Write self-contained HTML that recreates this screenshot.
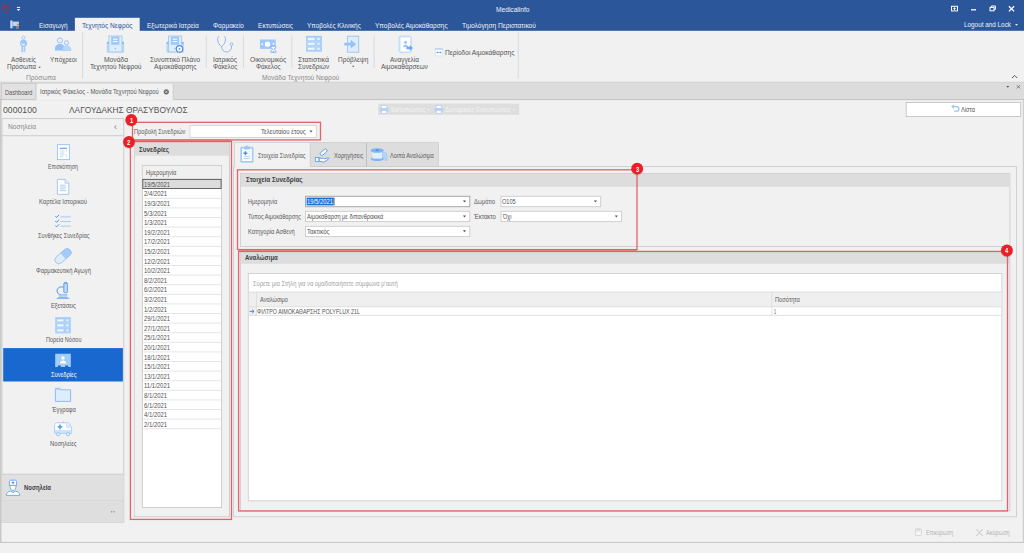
<!DOCTYPE html><html><head><meta charset="utf-8"><title>Medicalinfo</title><style>
html,body{margin:0;padding:0;background:#f1f1f1;}body{width:1024px;height:553px;overflow:hidden;position:relative;font-family:"Liberation Sans",sans-serif;}
#g{position:absolute;left:0;top:0;}
.t{position:absolute;white-space:nowrap;transform-origin:0 50%;height:10px;line-height:10px;}
.b{font-weight:bold;}.n{text-shadow:none;}
</style></head><body>
<svg id="g" width="1024" height="553" viewBox="0 0 1024 553">
<rect x="0.00" y="0.00" width="1024.00" height="30.80" fill="#2b579a" />
<rect x="74.90" y="17.80" width="64.80" height="13.70" fill="#f1f1f1" />
<rect x="0.00" y="82.00" width="1024.00" height="17.60" fill="#dcdcdc" />
<line x1="0.00" y1="82.20" x2="1024.00" y2="82.20" stroke="#d2d2d2" stroke-width="0.8"/>
<line x1="0.00" y1="99.60" x2="1024.00" y2="99.60" stroke="#c2c2c2" stroke-width="1"/>
<rect x="1.60" y="83.60" width="34.40" height="16.00" fill="#e2e2e2" stroke="#c6c6c6" stroke-width="0.8" />
<rect x="36.00" y="83.20" width="137.20" height="17.20" fill="#f1f1f1" />
<line x1="36.00" y1="83.20" x2="36.00" y2="99.60" stroke="#c6c6c6" stroke-width="0.8"/>
<line x1="173.20" y1="83.20" x2="173.20" y2="99.60" stroke="#c6c6c6" stroke-width="0.8"/>
<line x1="36.00" y1="83.20" x2="173.20" y2="83.20" stroke="#d4d4d4" stroke-width="0.8"/>
<rect x="0.00" y="100.00" width="1.50" height="442.50" fill="#c8c8c8" />
<line x1="1023.30" y1="100.00" x2="1023.30" y2="542.50" stroke="#c6c6c6" stroke-width="1"/>
<line x1="0.00" y1="542.40" x2="1024.00" y2="542.40" stroke="#c4c4c4" stroke-width="1"/>
<path d="M1015.00 23.95h3l-1.5 1.7z" fill="#e8eef8"/>
<g stroke="#fff" fill="none" stroke-width="1"><rect x="951.5" y="6.3" width="6" height="4.6"/><path d="M954.5 7.3v2.6M953.2 8.6h2.6" stroke-width="0.9"/><path d="M971 9.8h5" stroke-width="1.3"/><rect x="990" y="7.4" width="4" height="3.4"/><path d="M991.4 7.4v-1.4h4v3.4h-1.4"/><path d="M1008.9 6.2l5.2 5.2M1014.1 6.2l-5.2 5.2" stroke-width="1.3"/></g>
<g fill="none" stroke="#c5242c" stroke-width="0.6"><path d="M5.9 12.4C3.4 11 2 9.2 2.4 7.6M6.4 7.2C7.6 6 9.2 6 9.6 7.4 10 9 8.6 10.8 5.9 12.4"/></g><circle cx="4.5" cy="5.8" r="1.25" fill="#c5242c"/><path d="M2.3 8.6l2.4-.8 1.6.2 1.6-1.4" stroke="#c5242c" fill="none" stroke-width="1"/><circle cx="6.7" cy="11.5" r="0.6" fill="#c5242c"/>
<path d="M16.9 7.4h3.2" stroke="#fff" stroke-width="1"/><path d="M16.8 9h3.4l-1.7 2z" fill="#fff"/>
<g><rect x="10.3" y="20.5" width="2.2" height="7.8" fill="#d3def1"/><rect x="12.5" y="21.6" width="6.4" height="4.6" fill="#c4d3ec"/><rect x="13" y="26.1" width="2.6" height="2.6" fill="#1b6fd8"/><rect x="16" y="26.1" width="2.9" height="2.8" fill="#8d8579"/><rect x="17.2" y="23.8" width="1.7" height="1.3" fill="#d85a5a"/></g>
<line x1="82.60" y1="32.50" x2="82.60" y2="78.40" stroke="#d6d6d6" stroke-width="0.9"/>
<line x1="518.20" y1="32.50" x2="518.20" y2="78.40" stroke="#d6d6d6" stroke-width="0.9"/>
<line x1="206.20" y1="35.50" x2="206.20" y2="67.80" stroke="#d6d6d6" stroke-width="0.9"/>
<line x1="243.40" y1="35.50" x2="243.40" y2="67.80" stroke="#d6d6d6" stroke-width="0.9"/>
<line x1="291.80" y1="35.50" x2="291.80" y2="67.80" stroke="#d6d6d6" stroke-width="0.9"/>
<line x1="374.10" y1="35.50" x2="374.10" y2="67.80" stroke="#d6d6d6" stroke-width="0.9"/>
<path d="M38.30 66.65h2.6l-1.3 1.5z" fill="#666"/>
<path d="M351.90 65.85h2.6l-1.3 1.5z" fill="#666"/>
<path d="M1012 78l2.6-2.6 2.6 2.6" fill="none" stroke="#555" stroke-width="1"/>
<path d="M1006.30 86.00h3l-1.5 1.8z" fill="#555"/>
<path d="M1016.8 85.2l3.2 3.2M1020 85.2l-3.2 3.2" stroke="#666" stroke-width="0.8"/>
<circle cx="166.3" cy="91.8" r="2.6" fill="#6a6a6a"/><path d="M165.2 90.7l2.2 2.2M167.4 90.7l-2.2 2.2" stroke="#f1f1f1" stroke-width="0.7"/>
<rect x="378.10" y="103.60" width="141.10" height="11.20" fill="#dedede" />
<path d="M427.00 108.90h2.4l-1.2 1.4z" fill="#f4f4f4"/>
<path d="M512.40 108.90h2.4l-1.2 1.4z" fill="#f4f4f4"/>
<g transform="translate(379.8,105.7)"><rect x="1.8" y="0" width="5" height="3" fill="#fff" stroke="#a9c9ee" stroke-width="0.6"/><rect x="0" y="2.4" width="8.6" height="3.6" rx="0.8" fill="#b4d2f2"/><rect x="1.8" y="4.6" width="5" height="3" fill="#fff" stroke="#a9c9ee" stroke-width="0.6"/></g>
<g transform="translate(434.4,105.7)"><rect x="1.8" y="0" width="5" height="3" fill="#fff" stroke="#a9c9ee" stroke-width="0.6"/><rect x="0" y="2.4" width="8.6" height="3.6" rx="0.8" fill="#b4d2f2"/><rect x="1.8" y="4.6" width="5" height="3" fill="#fff" stroke="#a9c9ee" stroke-width="0.6"/></g>
<rect x="906.20" y="102.50" width="114.40" height="14.00" fill="#fff" stroke="#c4c4c4" stroke-width="0.9" />
<path d="M952.2 106.6h4.4a2.2 2.2 0 0 1 0 4.6h-2.4" fill="none" stroke="#9cc4ee" stroke-width="1.3"/><path d="M953.8 104.4l-2.6 2.2 2.6 2.2z" fill="#9cc4ee"/>
<rect x="2.00" y="118.60" width="121.80" height="403.60" fill="none" stroke="#cacaca" stroke-width="0.9" />
<line x1="2.00" y1="135.70" x2="123.80" y2="135.70" stroke="#cacaca" stroke-width="0.9"/>
<path d="M116.3 125.4l-1.6 1.7 1.6 1.7" fill="none" stroke="#666" stroke-width="0.8"/>
<rect x="3.20" y="348.10" width="119.70" height="33.40" fill="#1968d0" />
<rect x="2.40" y="474.20" width="121.00" height="26.40" fill="#e0e0e0" />
<line x1="2.00" y1="474.20" x2="123.80" y2="474.20" stroke="#c8c8c8" stroke-width="0.9"/>
<rect x="2.40" y="500.40" width="121.00" height="1.20" fill="#cdcdcd" />
<rect x="2.40" y="501.60" width="121.00" height="20.20" fill="#dedede" />
<rect x="111" y="511.2" width="1.2" height="1.2" fill="#888"/><rect x="113.4" y="511.2" width="1.2" height="1.2" fill="#888"/>
<rect x="190.00" y="125.60" width="126.30" height="11.90" fill="#fff" stroke="#cfcfcf" stroke-width="0.8" />
<path d="M309.45 130.60h3.1l-1.55 2.0z" fill="#555"/>
<rect x="134.30" y="142.80" width="95.20" height="373.90" fill="none" stroke="#cdcdcd" stroke-width="0.9" />
<rect x="134.60" y="143.00" width="94.60" height="12.70" fill="#dddddd" />
<rect x="142.30" y="165.50" width="79.30" height="342.00" fill="#fff" stroke="#c9c9c9" stroke-width="0.9" />
<rect x="142.80" y="166.00" width="78.30" height="13.10" fill="#f0f0f0" />
<line x1="142.30" y1="179.10" x2="221.60" y2="179.10" stroke="#cfcfcf" stroke-width="0.8"/>
<rect x="142.80" y="179.40" width="78.30" height="9.10" fill="#dcdcdc" stroke="#555" stroke-width="0.9" />
<line x1="142.80" y1="198.30" x2="221.10" y2="198.30" stroke="#dedede" stroke-width="0.8"/>
<line x1="142.80" y1="207.90" x2="221.10" y2="207.90" stroke="#dedede" stroke-width="0.8"/>
<line x1="142.80" y1="217.50" x2="221.10" y2="217.50" stroke="#dedede" stroke-width="0.8"/>
<line x1="142.80" y1="227.10" x2="221.10" y2="227.10" stroke="#dedede" stroke-width="0.8"/>
<line x1="142.80" y1="236.70" x2="221.10" y2="236.70" stroke="#dedede" stroke-width="0.8"/>
<line x1="142.80" y1="246.30" x2="221.10" y2="246.30" stroke="#dedede" stroke-width="0.8"/>
<line x1="142.80" y1="255.90" x2="221.10" y2="255.90" stroke="#dedede" stroke-width="0.8"/>
<line x1="142.80" y1="265.50" x2="221.10" y2="265.50" stroke="#dedede" stroke-width="0.8"/>
<line x1="142.80" y1="275.10" x2="221.10" y2="275.10" stroke="#dedede" stroke-width="0.8"/>
<line x1="142.80" y1="284.70" x2="221.10" y2="284.70" stroke="#dedede" stroke-width="0.8"/>
<line x1="142.80" y1="294.30" x2="221.10" y2="294.30" stroke="#dedede" stroke-width="0.8"/>
<line x1="142.80" y1="303.90" x2="221.10" y2="303.90" stroke="#dedede" stroke-width="0.8"/>
<line x1="142.80" y1="313.50" x2="221.10" y2="313.50" stroke="#dedede" stroke-width="0.8"/>
<line x1="142.80" y1="323.10" x2="221.10" y2="323.10" stroke="#dedede" stroke-width="0.8"/>
<line x1="142.80" y1="332.70" x2="221.10" y2="332.70" stroke="#dedede" stroke-width="0.8"/>
<line x1="142.80" y1="342.30" x2="221.10" y2="342.30" stroke="#dedede" stroke-width="0.8"/>
<line x1="142.80" y1="351.90" x2="221.10" y2="351.90" stroke="#dedede" stroke-width="0.8"/>
<line x1="142.80" y1="361.50" x2="221.10" y2="361.50" stroke="#dedede" stroke-width="0.8"/>
<line x1="142.80" y1="371.10" x2="221.10" y2="371.10" stroke="#dedede" stroke-width="0.8"/>
<line x1="142.80" y1="380.70" x2="221.10" y2="380.70" stroke="#dedede" stroke-width="0.8"/>
<line x1="142.80" y1="390.30" x2="221.10" y2="390.30" stroke="#dedede" stroke-width="0.8"/>
<line x1="142.80" y1="399.90" x2="221.10" y2="399.90" stroke="#dedede" stroke-width="0.8"/>
<line x1="142.80" y1="409.50" x2="221.10" y2="409.50" stroke="#dedede" stroke-width="0.8"/>
<line x1="142.80" y1="419.10" x2="221.10" y2="419.10" stroke="#dedede" stroke-width="0.8"/>
<line x1="142.80" y1="428.70" x2="221.10" y2="428.70" stroke="#dedede" stroke-width="0.8"/>
<rect x="233.60" y="166.60" width="782.90" height="350.20" fill="none" stroke="#cdcdcd" stroke-width="0.9" />
<rect x="310.30" y="142.60" width="128.20" height="24.00" fill="#dddddd" stroke="#cdcdcd" stroke-width="0.8" />
<line x1="366.50" y1="143.00" x2="366.50" y2="166.40" stroke="#b8b8b8" stroke-width="0.8"/>
<rect x="234.40" y="142.40" width="75.90" height="25.00" fill="#f1f1f1" />
<path d="M234.4 167V142.4H310.3V166.6" fill="none" stroke="#cdcdcd" stroke-width="0.9"/>
<rect x="240.40" y="173.50" width="769.50" height="73.00" fill="none" stroke="#cdcdcd" stroke-width="0.9" />
<rect x="240.80" y="173.80" width="768.70" height="13.00" fill="#dddddd" />
<rect x="305.50" y="196.30" width="164.30" height="10.40" fill="#fff" stroke="#a8a8a8" stroke-width="1" />
<rect x="305.50" y="211.30" width="164.30" height="10.30" fill="#fff" stroke="#cbcbcb" stroke-width="0.9" />
<rect x="305.50" y="226.30" width="164.30" height="10.30" fill="#fff" stroke="#cbcbcb" stroke-width="0.9" />
<path d="M462.95 200.40h3.1l-1.55 2.0z" fill="#555"/>
<path d="M462.95 215.40h3.1l-1.55 2.0z" fill="#555"/>
<path d="M462.95 230.30h3.1l-1.55 2.0z" fill="#555"/>
<rect x="306.60" y="197.60" width="26.80" height="7.80" fill="#1a6fd8" />
<line x1="334.00" y1="197.60" x2="334.00" y2="205.40" stroke="#333" stroke-width="0.8"/>
<rect x="501.00" y="196.30" width="99.70" height="10.40" fill="#fff" stroke="#cbcbcb" stroke-width="0.9" />
<rect x="501.00" y="211.30" width="120.60" height="10.30" fill="#fff" stroke="#cbcbcb" stroke-width="0.9" />
<path d="M593.85 200.40h3.1l-1.55 2.0z" fill="#555"/>
<path d="M614.75 215.40h3.1l-1.55 2.0z" fill="#555"/>
<rect x="240.40" y="252.30" width="769.50" height="258.30" fill="none" stroke="#cdcdcd" stroke-width="0.9" />
<rect x="240.80" y="252.60" width="768.70" height="11.20" fill="#dddddd" />
<rect x="248.30" y="273.50" width="753.60" height="227.30" fill="#fff" stroke="#cfcfcf" stroke-width="0.9" />
<rect x="248.80" y="292.00" width="752.60" height="14.80" fill="#efefef" />
<rect x="248.80" y="306.80" width="7.60" height="8.60" fill="#efefef" />
<line x1="248.30" y1="292.10" x2="1001.90" y2="292.10" stroke="#d9d9d9" stroke-width="0.8"/>
<line x1="248.30" y1="306.80" x2="1001.90" y2="306.80" stroke="#d9d9d9" stroke-width="0.8"/>
<line x1="256.50" y1="292.00" x2="256.50" y2="315.40" stroke="#d9d9d9" stroke-width="0.8"/>
<line x1="771.90" y1="292.00" x2="771.90" y2="315.40" stroke="#d9d9d9" stroke-width="0.8"/>
<line x1="248.30" y1="315.40" x2="1001.90" y2="315.40" stroke="#d9d9d9" stroke-width="0.8"/>
<path d="M249.6 311.4h4.2M252.2 309.8l1.8 1.6-1.8 1.6" fill="none" stroke="#2a6fd6" stroke-width="0.8"/>
<rect x="915.6" y="529" width="5.8" height="6.6" rx="0.6" fill="#f6f6f6" stroke="#cfcfcf" stroke-width="0.8"/><rect x="916.8" y="529" width="3" height="2" fill="none" stroke="#cfcfcf" stroke-width="0.6"/>
<path d="M976.4 529.2l6.2 6.6M982.6 529.2l-6.2 6.6" stroke="#d0d0d0" stroke-width="1.2"/>
<rect x="132.50" y="139.60" width="99.00" height="2.30" fill="#ea9096" />
<rect x="238.60" y="249.30" width="398.40" height="2.50" fill="#ea9096" />
<rect x="132.50" y="122.30" width="188.00" height="17.60" fill="none" stroke="#e5626a" stroke-width="1.3" />
<rect x="130.40" y="141.50" width="101.10" height="377.90" fill="none" stroke="#e5626a" stroke-width="1.3" />
<rect x="237.50" y="169.80" width="399.50" height="79.80" fill="none" stroke="#e5626a" stroke-width="1.3" />
<rect x="238.60" y="251.40" width="768.90" height="259.60" fill="none" stroke="#e5626a" stroke-width="1.3" />
<circle cx="131.3" cy="120.5" r="6.3" fill="rgba(0,0,0,0.12)"/><circle cx="131.3" cy="120" r="5.9" fill="#ec1e28"/>
<circle cx="129" cy="142.5" r="6.3" fill="rgba(0,0,0,0.12)"/><circle cx="129" cy="142" r="5.9" fill="#ec1e28"/>
<circle cx="637.2" cy="169.2" r="6.3" fill="rgba(0,0,0,0.12)"/><circle cx="637.2" cy="168.7" r="5.9" fill="#ec1e28"/>
<circle cx="1006.9" cy="251.0" r="6.3" fill="rgba(0,0,0,0.12)"/><circle cx="1006.9" cy="250.5" r="5.9" fill="#ec1e28"/>
<g><rect x="57.4" y="144.6" width="12" height="15" fill="#fdfeff" stroke="#9cc2ee" stroke-width="0.9"/><path d="M59.8 148.3h7.2" stroke="#4f92dc" stroke-width="1"/><path d="M59.8 151h4.6M59.8 153h4.6M59.8 154.8h4.6M59.8 156.6h3.4M65.6 151h1.4M65.6 154.8h1.4M65.6 156.6h1.4" stroke="#b9d4f2" stroke-width="0.8"/></g>
<g><path d="M57.4 179.4h7.6l3.8 3.8v11.2h-11.4z" fill="#fdfeff" stroke="#9cc2ee" stroke-width="0.9"/><path d="M65 179.4v3.8h3.8" fill="#e6f0fc" stroke="#9cc2ee" stroke-width="0.7"/><path d="M59.8 185.2h5.6M59.8 187h6.6M59.8 188.8h5.6M59.8 190.6h6.6" stroke="#a9c9ef" stroke-width="0.9"/></g>
<g fill="none"><path d="M55.4 216.2l1.2 1.3 2.4-2.6M55.4 221l1.2 1.3 2.4-2.6M55.4 225.6l1.2 1.3 2.4-2.6" stroke="#4f92dc" stroke-width="1"/><path d="M60.4 216.8h10.4" stroke="#c4daf4" stroke-width="1.8"/><path d="M60.4 221.5h10.4M60.4 226.1h10.4" stroke="#a4c6ee" stroke-width="0.9"/></g>
<g transform="rotate(-41 63 256.2)"><rect x="53.6" y="252.3" width="18.8" height="7.8" rx="3.9" fill="#deedfd" stroke="#9cc2ee" stroke-width="0.9"/><path d="M63.6 252.3h4.9a3.9 3.9 0 0 1 0 7.8h-4.9z" fill="#a3ccf8" stroke="#9cc2ee" stroke-width="0.9"/></g>
<g><rect x="63.8" y="283" width="3.6" height="9.6" rx="0.6" fill="#bcdafb" stroke="#4f92dc" stroke-width="0.8"/><rect x="64.4" y="282.2" width="2.4" height="1.2" fill="#4f92dc"/><path d="M63.4 287.2c-4.2-1.4-7 1.6-6.2 4.6.4 1.6 1.8 2.6 3.4 2.8" fill="none" stroke="#4f92dc" stroke-width="1"/><rect x="58.8" y="294.2" width="8.6" height="1.4" fill="#8bbaf0"/><path d="M57.4 298.4l1.6-2h8l1.6 2z" fill="#8bbaf0"/><rect x="56.6" y="297.8" width="12.8" height="1" fill="#7db1ee"/></g>
<g><rect x="55.2" y="317.2" width="15.6" height="16.2" fill="#a3ccf8"/><rect x="57" y="319.2" width="6.6" height="2.2" fill="#f2f8ff" stroke="#c2dcf8" stroke-width="0.4"/><rect x="65.6" y="319.2" width="3.4" height="2.2" fill="#d9eafc"/><path d="M55.2 322.9h15.6" stroke="#d4e6fb" stroke-width="0.5"/><rect x="57" y="324.2" width="6.6" height="2.2" fill="#f2f8ff" stroke="#c2dcf8" stroke-width="0.4"/><rect x="65.6" y="324.2" width="3.4" height="2.2" fill="#d9eafc"/><path d="M55.2 327.9h15.6" stroke="#d4e6fb" stroke-width="0.5"/><rect x="57" y="329.2" width="6.6" height="2.2" fill="#f2f8ff" stroke="#c2dcf8" stroke-width="0.4"/><rect x="65.6" y="329.2" width="3.4" height="2.2" fill="#d9eafc"/><path d="M55.2 332.9h15.6" stroke="#d4e6fb" stroke-width="0.5"/></g>
<g><path d="M55.2 353.7h15.6v13.3h-2.6v-1.4h-3v1.4h-4.4v-1.4h-3v1.4h-2.6z" fill="#a2cdfb"/><circle cx="63" cy="358" r="1.7" fill="#fff"/><path d="M59.9 363.4c0-2 1.4-3 3.1-3s3.1 1 3.1 3z" fill="#fff"/></g>
<g><path d="M55.4 388.4h4.6l.8 1.4h9.8v11.6h-15.2z" fill="#deedfd" stroke="#86b6ec" stroke-width="0.9"/><path d="M55.4 388.4h4.6l.8 1.4h-5.4z" fill="#a9cff8"/></g>
<g><path d="M54.6 433.4v-8c0-1.6 1-2.6 2.6-2.6h10.2c1.4 0 2.2.6 2.8 1.8l1.4 3.2v5.6z" fill="#fff" stroke="#a6cbf6" stroke-width="0.9"/><path d="M66 423.4h1.6c1 0 1.6.4 2 1.4l1.4 3.4h-5z" fill="#d5e8fd"/><rect x="55" y="430" width="16.2" height="3" fill="#cfe4fc"/><path d="M60 424.6v4.6M57.7 426.9h4.6" stroke="#5da2f2" stroke-width="1.7"/><path d="M62.4 422.6l1-1.4 1 1.4z" fill="#8bbaf0"/><circle cx="58.2" cy="434.2" r="1.7" fill="#e8f2fe" stroke="#8bbaf0" stroke-width="0.8"/><circle cx="68" cy="434.2" r="1.7" fill="#e8f2fe" stroke="#8bbaf0" stroke-width="0.8"/></g>
<g><circle cx="23.4" cy="37.6" r="1.5" fill="#f4f9ff" stroke="#8bbaf0" stroke-width="0.8"/><path d="M20 43.2c0-2.2 1.4-3.6 3.5-3.6s3.6 1.4 3.6 3.6c0 1.6-.8 2.8-1.8 3.4h-3.6c-1-.6-1.7-1.8-1.7-3.4z" fill="#9dc8f7"/><rect x="21.3" y="46" width="1.7" height="6.2" fill="#a6cdf8"/><rect x="23.6" y="46" width="1.7" height="6.2" fill="#a6cdf8"/><path d="M21.2 43.6l1.2 1h2.4" stroke="#fff" stroke-width="1" fill="none"/></g>
<g><path d="M55 50.6v-2.2c0-2.8 2-4.5 4.9-4.5s4.9 1.7 4.9 4.5v2.2z" fill="#93c2f6"/><circle cx="59.9" cy="40.5" r="2.6" fill="#e4f0fe" stroke="#8bbaf0" stroke-width="0.8"/><path d="M62.4 50.6v-1.4c0-2.2 1.6-3.4 4.2-3.4s4.3 1.2 4.3 3.4v1.4z" fill="#b8d8fa" stroke="#9cc6f5" stroke-width="0.5"/><circle cx="66.5" cy="42.8" r="2.1" fill="#e4f0fe" stroke="#8bbaf0" stroke-width="0.8"/></g>
<g transform="translate(107,0)"><path d="M0.2 42h16.4v10h-16.4z" fill="#c6dffb" stroke="#9cc2ee" stroke-width="0.6"/><rect x="1.9" y="36" width="13.1" height="16" fill="#deedfd" stroke="#9cc2ee" stroke-width="0.8"/><rect x="4.2" y="36.6" width="8.2" height="8.2" fill="#9dc8f7"/><path d="M6 39.2h4.6M6 41.6h4.6" stroke="#fff" stroke-width="1"/><rect x="0.2" y="42" width="1.8" height="2" fill="#8bbaf0"/><rect x="15" y="42" width="1.8" height="2" fill="#8bbaf0"/><path d="M8.3 47.4l.8 1.4a.9.9 0 0 1-1.6 0z" fill="#7fb2ee"/></g>
<g transform="translate(166.7,0)"><path d="M0.2 42h16.4v10h-16.4z" fill="#c6dffb" stroke="#9cc2ee" stroke-width="0.6"/><rect x="1.9" y="36" width="13.1" height="16" fill="#deedfd" stroke="#9cc2ee" stroke-width="0.8"/><rect x="4.2" y="36.6" width="8.2" height="8.2" fill="#9dc8f7"/><path d="M6 39.2h4.6M6 41.6h4.6" stroke="#fff" stroke-width="1"/><rect x="0.2" y="42" width="1.8" height="2" fill="#8bbaf0"/><rect x="15" y="42" width="1.8" height="2" fill="#8bbaf0"/><path d="M8.3 47.4l.8 1.4a.9.9 0 0 1-1.6 0z" fill="#7fb2ee"/></g>
<circle cx="179.5" cy="48.9" r="3.2" fill="#fff" stroke="#4f8fdc" stroke-width="1.2"/><circle cx="179.5" cy="48.9" r="0.9" fill="#4f8fdc"/>
<g fill="none" stroke="#86b2e6" stroke-width="0.9"><path d="M219.2 36.8c-1 0-1.6.4-1.6 1.6 0 3.6 1.4 6.6 4 8.2 2.6-1.6 4-4.6 4-8.2 0-1.2-.6-1.6-1.6-1.6"/><path d="M221.6 46.6c0 3.2 2 5.4 4.9 5.4s5-2.2 5-5v-1.4"/><circle cx="231.6" cy="44.2" r="1.3" fill="#f4f9ff"/></g>
<g><rect x="260" y="39.5" width="15.7" height="9.4" fill="#9dc8f7"/><circle cx="267.5" cy="44.2" r="2.6" fill="#fff"/><circle cx="262.2" cy="44.2" r="0.9" fill="#fff"/><circle cx="273.4" cy="43.8" r="0.9" fill="#fff"/><path d="M270.9 46.2h5v1l-1.8 2 1.8 2v1.2h-5v-1.2l1.8-2-1.8-2z" fill="#fff" stroke="#6ea8ec" stroke-width="0.8"/><path d="M271.8 51.8l1.6-1.4 1.6 1.4z" fill="#8bbaf0"/></g>
<g><rect x="306.1" y="35.9" width="15.9" height="16" fill="#a3ccf8"/><rect x="307.8" y="37.8" width="7" height="2.4" fill="#eef6ff" stroke="#c2dcf8" stroke-width="0.4"/><rect x="317" y="37.8" width="3.2" height="2.4" fill="#d9eafc"/><path d="M306.1 41.699999999999996h15.9M316 36.8v5" stroke="#cfe3fb" stroke-width="0.5"/><rect x="307.8" y="42.7" width="7" height="2.4" fill="#eef6ff" stroke="#c2dcf8" stroke-width="0.4"/><rect x="317" y="42.7" width="3.2" height="2.4" fill="#d9eafc"/><path d="M306.1 46.6h15.9M316 41.7v5" stroke="#cfe3fb" stroke-width="0.5"/><rect x="307.8" y="47.6" width="7" height="2.4" fill="#eef6ff" stroke="#c2dcf8" stroke-width="0.4"/><rect x="317" y="47.6" width="3.2" height="2.4" fill="#d9eafc"/><path d="M306.1 51.5h15.9M316 46.6v5" stroke="#cfe3fb" stroke-width="0.5"/></g>
<g><rect x="347.4" y="36.2" width="11.3" height="16" fill="#deedfd" stroke="#9cc2ee" stroke-width="0.9"/><path d="M344.3 42.8h6.4v-3l5.4 4.4-5.4 4.4v-3h-6.4z" fill="#93c2f6"/></g>
<g><path d="M399 37l1.6-1h9.4l1.4 1.2v14.4l-1.4 1h-9.4l-1.6-1z" fill="#d3e6fb" stroke="#b5d4f5" stroke-width="0.7"/><rect x="400.6" y="37.4" width="9.6" height="14" fill="#fff"/><circle cx="405.5" cy="42.3" r="1.6" fill="#9dc8f7"/><path d="M403 46.9c0-1.6 1-2.2 2.5-2.2s2.5.6 2.5 2.2z" fill="#9dc8f7"/><path d="M406.4 46.8h3.4v-1.7l3.2 2.9-3.2 2.9v-1.7h-3.4z" fill="#6aaaf2"/></g>
<g><rect x="435.2" y="48.3" width="7.6" height="7.6" fill="#fff" stroke="#cfe2f8" stroke-width="0.8"/><rect x="435.2" y="48.3" width="7.6" height="1.5" fill="#b5d4f7"/><path d="M436.6 52.4h4.8" stroke="#4f92dc" stroke-width="0.7"/><path d="M437.8 51.4l-1.3 1 1.3 1zM440.2 51.4l1.3 1-1.3 1z" fill="#4f92dc"/></g>
<g><rect x="240.3" y="146.8" width="13.2" height="15.9" rx="1.4" fill="#a6ccf6"/><rect x="242" y="148.6" width="9.8" height="12.4" fill="#fff"/><rect x="244" y="146.4" width="5.8" height="3" rx="0.6" fill="#9cc6f5"/><rect x="245.8" y="145.6" width="2.2" height="1.4" rx="0.6" fill="#a6ccf6"/><path d="M245.4 151.2v4M243.4 153.2h4" stroke="#4f92dc" stroke-width="1.5"/><path d="M248.2 151.5h2.2M248.2 153.4h2.2M248.2 155.2h2.2" stroke="#cfe2f8" stroke-width="0.7"/><path d="M243.6 156.7h6.8M243.6 158.6h6.8" stroke="#9cc2ee" stroke-width="0.7"/></g>
<g fill="#fff" stroke="#3d8fe0" stroke-width="0.8"><rect x="319.6" y="150.6" width="8" height="3.3" rx="1.65" transform="rotate(-41 323.6 152.3)"/><path d="M319 158.2h3.4c1 0 1.4.4 2.2.6l3.4-.9c.8-.2 1.2.5.6 1l-3.6 2.6c-1 .6-2 .6-3 .4l-3-.7z"/><rect x="315.3" y="157.6" width="3.6" height="4" stroke-width="0.7"/></g>
<g><path d="M382.4 152.2l4.4 1v7.4l-4.4-1.2z" fill="#b5d6fa" stroke="#8fbef4" stroke-width="0.5"/><ellipse cx="377.2" cy="158.8" rx="6.5" ry="2.3" fill="#7db6f4"/><rect x="372.4" y="150.6" width="9.6" height="8" fill="#e2effd"/><ellipse cx="377.2" cy="150.5" rx="6.5" ry="2.3" fill="#7db6f4"/><ellipse cx="377.2" cy="150.3" rx="2" ry="0.7" fill="#3d8fe0"/></g>
<g><path d="M6.2 495.4c.2-2.6 1.8-3.6 4.2-4.2l2.6 1.4 2.6-1.4c2.4.6 4 1.6 4.2 4.2z" fill="#fff" stroke="#5b9ae0" stroke-width="0.8"/><path d="M10 485.4c0 3 1 5.2 3 5.2s3-2.2 3-5.2z" fill="#fff" stroke="#5b9ae0" stroke-width="0.8"/><path d="M9.4 485.4v-3.4c0-1.2.6-1.8 1.8-1.8h3.600c1.200 0 1.800.6 1.800 1.800v3.400z" fill="#fff" stroke="#5b9ae0" stroke-width="0.8"/><path d="M13 481.400v2.600M11.700 482.700h2.600" stroke="#3d7fd6" stroke-width="0.9"/></g>
</svg>
<span class="t n" style="left:496.00px;top:4.60px;font-size:6.78px;color:#eef2f9;transform:scaleX(0.9785);">Medicalinfo</span>
<span class="t n" style="left:963.50px;top:19.80px;font-size:6.78px;color:#eef2f9;transform:scaleX(0.9391);">Logout and Lock</span>
<span class="t n" style="left:38.75px;top:20.90px;font-size:7.42px;color:#eef2f9;transform:scaleX(0.8748);">Εισαγωγή</span>
<span class="t" style="left:82.00px;top:20.90px;font-size:7.42px;color:#2b579a;transform:scaleX(0.8899);">Τεχνητός Νεφρός</span>
<span class="t n" style="left:146.90px;top:20.90px;font-size:7.42px;color:#eef2f9;transform:scaleX(0.8826);">Εξωτερικά Ιατρεία</span>
<span class="t n" style="left:212.80px;top:20.90px;font-size:7.42px;color:#eef2f9;transform:scaleX(0.8647);">Φαρμακείο</span>
<span class="t n" style="left:258.00px;top:20.90px;font-size:7.42px;color:#eef2f9;transform:scaleX(0.8861);">Εκτυπώσεις</span>
<span class="t n" style="left:307.20px;top:20.90px;font-size:7.42px;color:#eef2f9;transform:scaleX(0.8682);">Υποβολές Κλινικής</span>
<span class="t n" style="left:374.70px;top:20.90px;font-size:7.42px;color:#eef2f9;transform:scaleX(0.8825);">Υποβολές Αιμοκάθαρσης</span>
<span class="t n" style="left:461.60px;top:20.90px;font-size:7.42px;color:#eef2f9;transform:scaleX(0.8907);">Τιμολόγηση Περιστατικού</span>
<span class="t n" style="left:11.40px;top:54.90px;font-size:7.31px;color:#545454;transform:scaleX(0.8666);">Ασθενείς</span>
<span class="t n" style="left:6.70px;top:62.40px;font-size:7.31px;color:#545454;transform:scaleX(0.8890);">Πρόσωπα</span>
<span class="t n" style="left:49.70px;top:54.90px;font-size:7.31px;color:#545454;transform:scaleX(0.8733);">Υπόχρεοι</span>
<span class="t n" style="left:103.70px;top:54.90px;font-size:7.31px;color:#545454;transform:scaleX(0.9165);">Μονάδα</span>
<span class="t n" style="left:89.60px;top:62.40px;font-size:7.31px;color:#545454;transform:scaleX(0.9072);">Τεχνητού Νεφρού</span>
<span class="t n" style="left:149.70px;top:54.90px;font-size:7.31px;color:#545454;transform:scaleX(0.8959);">Συνοπτικό Πλάνο</span>
<span class="t n" style="left:153.50px;top:62.40px;font-size:7.31px;color:#545454;transform:scaleX(0.9012);">Αιμοκάθαρσης</span>
<span class="t n" style="left:212.80px;top:54.90px;font-size:7.31px;color:#545454;transform:scaleX(0.9253);">Ιατρικός</span>
<span class="t n" style="left:212.80px;top:62.40px;font-size:7.31px;color:#545454;transform:scaleX(0.8624);">Φάκελος</span>
<span class="t n" style="left:250.00px;top:54.90px;font-size:7.31px;color:#545454;transform:scaleX(0.9118);">Οικονομικός</span>
<span class="t n" style="left:255.80px;top:62.40px;font-size:7.31px;color:#545454;transform:scaleX(0.8731);">Φάκελος</span>
<span class="t n" style="left:298.40px;top:54.90px;font-size:7.31px;color:#545454;transform:scaleX(0.9521);">Στατιστικά</span>
<span class="t n" style="left:298.40px;top:62.40px;font-size:7.31px;color:#545454;transform:scaleX(0.9019);">Συνεδριών</span>
<span class="t n" style="left:337.90px;top:54.90px;font-size:7.31px;color:#545454;transform:scaleX(0.8953);">Πρόβλεψη</span>
<span class="t n" style="left:390.30px;top:54.90px;font-size:7.31px;color:#545454;transform:scaleX(0.8885);">Αναγγελία</span>
<span class="t n" style="left:381.30px;top:62.40px;font-size:7.31px;color:#545454;transform:scaleX(0.8989);">Αιμοκαθάρσεων</span>
<span class="t n" style="left:444.70px;top:48.00px;font-size:7.31px;color:#545454;transform:scaleX(0.9041);">Περίοδοι Αιμοκάθαρσης</span>
<span class="t n" style="left:26.00px;top:72.90px;font-size:7.31px;color:#8a8a8a;transform:scaleX(0.9134);">Πρόσωπα</span>
<span class="t n" style="left:261.90px;top:72.70px;font-size:7.31px;color:#8a8a8a;transform:scaleX(0.9089);">Μονάδα Τεχνητού Νεφρού</span>
<span class="t n" style="left:4.50px;top:87.60px;font-size:6.36px;color:#585858;transform:scaleX(0.8835);">Dashboard</span>
<span class="t n" style="left:40.00px;top:87.30px;font-size:6.36px;color:#585858;transform:scaleX(0.9235);">Ιατρικός Φάκελος - Μονάδα Τεχνητού Νεφρού</span>
<span class="t" style="left:2.70px;top:105.00px;font-size:8.69px;color:#555;transform:scaleX(1.0010);">0000100</span>
<span class="t" style="left:69.00px;top:105.00px;font-size:8.69px;color:#555;transform:scaleX(0.9620);">ΛΑΓΟΥΔΑΚΗΣ ΘΡΑΣΥΒΟΥΛΟΣ</span>
<span class="t" style="left:390.60px;top:104.60px;font-size:6.36px;color:#f4f4f4;transform:scaleX(1.0288);">Εκτυπώσεις</span>
<span class="t" style="left:445.00px;top:104.60px;font-size:6.36px;color:#f4f4f4;transform:scaleX(1.0183);">Δυναμικές Εκτυπώσεις</span>
<span class="t" style="left:961.20px;top:104.90px;font-size:6.36px;color:#525252;transform:scaleX(0.8861);">Λίστα</span>
<span class="t n" style="left:7.70px;top:122.30px;font-size:6.57px;color:#858585;transform:scaleX(1.0159);">Νοσηλεία</span>
<span class="t n" style="left:48.10px;top:162.20px;font-size:6.36px;color:#5a5a5a;transform:scaleX(0.8355);">Επισκόπηση</span>
<span class="t n" style="left:39.00px;top:196.80px;font-size:6.36px;color:#5a5a5a;transform:scaleX(0.9222);">Καρτέλα Ιστορικού</span>
<span class="t n" style="left:37.50px;top:231.30px;font-size:6.36px;color:#5a5a5a;transform:scaleX(0.8996);">Συνθήκες Συνεδρίας</span>
<span class="t n" style="left:36.00px;top:266.30px;font-size:6.36px;color:#5a5a5a;transform:scaleX(0.9129);">Φαρμακευτική Αγωγή</span>
<span class="t n" style="left:50.50px;top:300.80px;font-size:6.36px;color:#5a5a5a;transform:scaleX(0.9132);">Εξετάσεις</span>
<span class="t n" style="left:45.50px;top:335.30px;font-size:6.36px;color:#5a5a5a;transform:scaleX(0.8762);">Πορεία Νόσου</span>
<span class="t" style="left:50.50px;top:369.90px;font-size:6.36px;color:#fff;transform:scaleX(0.9138);">Συνεδρίες</span>
<span class="t n" style="left:51.50px;top:404.70px;font-size:6.36px;color:#5a5a5a;transform:scaleX(0.9035);">Έγγραφα</span>
<span class="t n" style="left:49.80px;top:438.90px;font-size:6.36px;color:#5a5a5a;transform:scaleX(0.9197);">Νοσηλείες</span>
<span class="t b" style="left:23.60px;top:483.30px;font-size:6.47px;color:#404040;transform:scaleX(0.9167);">Νοσηλεία</span>
<span class="t n" style="left:133.75px;top:126.80px;font-size:6.36px;color:#5a5a5a;transform:scaleX(0.8920);">Προβολή Συνεδριών</span>
<span class="t" style="left:260.60px;top:126.80px;font-size:6.36px;color:#525252;transform:scaleX(0.9500);">Τελευταίου έτους</span>
<span class="t b" style="left:139.00px;top:144.50px;font-size:6.47px;color:#404040;transform:scaleX(0.9841);">Συνεδρίες</span>
<span class="t n" style="left:145.60px;top:168.00px;font-size:6.36px;color:#5a5a5a;transform:scaleX(0.9016);">Ημερομηνία</span>
<span class="t" style="left:143.80px;top:179.70px;font-size:6.68px;color:#525252;transform:scaleX(0.8758);">19/5/2021</span>
<span class="t" style="left:143.80px;top:189.30px;font-size:6.68px;color:#525252;transform:scaleX(0.8894);">2/4/2021</span>
<span class="t" style="left:143.80px;top:198.90px;font-size:6.68px;color:#525252;transform:scaleX(0.8758);">19/3/2021</span>
<span class="t" style="left:143.80px;top:208.50px;font-size:6.68px;color:#525252;transform:scaleX(0.8894);">5/3/2021</span>
<span class="t" style="left:143.80px;top:218.10px;font-size:6.68px;color:#525252;transform:scaleX(0.8894);">1/3/2021</span>
<span class="t" style="left:143.80px;top:227.70px;font-size:6.68px;color:#525252;transform:scaleX(0.8758);">19/2/2021</span>
<span class="t" style="left:143.80px;top:237.30px;font-size:6.68px;color:#525252;transform:scaleX(0.8758);">17/2/2021</span>
<span class="t" style="left:143.80px;top:246.90px;font-size:6.68px;color:#525252;transform:scaleX(0.8758);">15/2/2021</span>
<span class="t" style="left:143.80px;top:256.50px;font-size:6.68px;color:#525252;transform:scaleX(0.8758);">12/2/2021</span>
<span class="t" style="left:143.80px;top:266.10px;font-size:6.68px;color:#525252;transform:scaleX(0.8758);">10/2/2021</span>
<span class="t" style="left:143.80px;top:275.70px;font-size:6.68px;color:#525252;transform:scaleX(0.8894);">8/2/2021</span>
<span class="t" style="left:143.80px;top:285.30px;font-size:6.68px;color:#525252;transform:scaleX(0.8894);">6/2/2021</span>
<span class="t" style="left:143.80px;top:294.90px;font-size:6.68px;color:#525252;transform:scaleX(0.8894);">3/2/2021</span>
<span class="t" style="left:143.80px;top:304.50px;font-size:6.68px;color:#525252;transform:scaleX(0.8894);">1/2/2021</span>
<span class="t" style="left:143.80px;top:314.10px;font-size:6.68px;color:#525252;transform:scaleX(0.8758);">29/1/2021</span>
<span class="t" style="left:143.80px;top:323.70px;font-size:6.68px;color:#525252;transform:scaleX(0.8758);">27/1/2021</span>
<span class="t" style="left:143.80px;top:333.30px;font-size:6.68px;color:#525252;transform:scaleX(0.8758);">25/1/2021</span>
<span class="t" style="left:143.80px;top:342.90px;font-size:6.68px;color:#525252;transform:scaleX(0.8758);">20/1/2021</span>
<span class="t" style="left:143.80px;top:352.50px;font-size:6.68px;color:#525252;transform:scaleX(0.8758);">18/1/2021</span>
<span class="t" style="left:143.80px;top:362.10px;font-size:6.68px;color:#525252;transform:scaleX(0.8758);">15/1/2021</span>
<span class="t" style="left:143.80px;top:371.70px;font-size:6.68px;color:#525252;transform:scaleX(0.8758);">13/1/2021</span>
<span class="t" style="left:143.80px;top:381.30px;font-size:6.68px;color:#525252;transform:scaleX(0.8908);">11/1/2021</span>
<span class="t" style="left:143.80px;top:390.90px;font-size:6.68px;color:#525252;transform:scaleX(0.8894);">8/1/2021</span>
<span class="t" style="left:143.80px;top:400.50px;font-size:6.68px;color:#525252;transform:scaleX(0.8894);">6/1/2021</span>
<span class="t" style="left:143.80px;top:410.10px;font-size:6.68px;color:#525252;transform:scaleX(0.8894);">4/1/2021</span>
<span class="t" style="left:143.80px;top:419.70px;font-size:6.68px;color:#525252;transform:scaleX(0.8894);">2/1/2021</span>
<span class="t n" style="left:258.40px;top:150.90px;font-size:6.36px;color:#5a5a5a;transform:scaleX(0.9002);">Στοιχεία Συνεδρίας</span>
<span class="t n" style="left:333.75px;top:150.90px;font-size:6.36px;color:#5a5a5a;transform:scaleX(0.8863);">Χορηγήσεις</span>
<span class="t n" style="left:390.25px;top:150.90px;font-size:6.36px;color:#5a5a5a;transform:scaleX(0.8696);">Λοιπά Αναλώσιμα</span>
<span class="t b" style="left:245.50px;top:175.40px;font-size:6.47px;color:#404040;transform:scaleX(0.9761);">Στοιχεία Συνεδρίας</span>
<span class="t n" style="left:248.00px;top:196.60px;font-size:6.36px;color:#5a5a5a;transform:scaleX(0.8675);">Ημερομηνία</span>
<span class="t n" style="left:248.00px;top:211.60px;font-size:6.36px;color:#5a5a5a;transform:scaleX(0.8815);">Τύπος Αιμοκάθαρσης</span>
<span class="t n" style="left:248.00px;top:226.60px;font-size:6.36px;color:#5a5a5a;transform:scaleX(0.8993);">Κατηγορία Ασθενή</span>
<span class="t" style="left:307.00px;top:196.70px;font-size:6.68px;color:#fff;transform:scaleX(0.8758);">19/5/2021</span>
<span class="t" style="left:306.60px;top:211.70px;font-size:6.36px;color:#525252;transform:scaleX(0.8843);">Αιμοκάθαρση με διπανθρακικά</span>
<span class="t" style="left:306.60px;top:226.70px;font-size:6.36px;color:#525252;transform:scaleX(0.9505);">Τακτικός</span>
<span class="t n" style="left:474.00px;top:196.60px;font-size:6.36px;color:#5a5a5a;transform:scaleX(0.8744);">Δωμάτιο</span>
<span class="t n" style="left:474.00px;top:211.60px;font-size:6.36px;color:#5a5a5a;transform:scaleX(0.9356);">Έκτακτο</span>
<span class="t" style="left:501.90px;top:196.70px;font-size:6.68px;color:#525252;transform:scaleX(0.8390);">Ο105</span>
<span class="t" style="left:502.50px;top:211.70px;font-size:6.36px;color:#525252;transform:scaleX(0.8671);">Όχι</span>
<span class="t b" style="left:245.40px;top:253.00px;font-size:6.47px;color:#404040;transform:scaleX(0.9330);">Αναλώσιμα</span>
<span class="t n" style="left:252.60px;top:279.20px;font-size:6.36px;color:#a2a2a2;transform:scaleX(0.9054);">Σύρετε μια Στήλη για να ομαδοποιήσετε σύμφωνα μ'αυτή</span>
<span class="t n" style="left:259.60px;top:295.10px;font-size:6.36px;color:#5a5a5a;transform:scaleX(0.8867);">Αναλώσιμο</span>
<span class="t n" style="left:775.00px;top:295.10px;font-size:6.36px;color:#5a5a5a;transform:scaleX(0.8967);">Ποσότητα</span>
<span class="t" style="left:257.40px;top:306.80px;font-size:6.57px;color:#525252;transform:scaleX(0.8156);">ΦΙΛΤΡΟ ΑΙΜΟΚΑΘΑΡΣΗΣ POLYFLUX 21L</span>
<span class="t" style="left:773.70px;top:306.80px;font-size:6.57px;color:#525252;transform:scaleX(0.5744);">1</span>
<span class="t n" style="left:925.70px;top:527.80px;font-size:6.36px;color:#b4b4b4;transform:scaleX(0.8305);">Επικύρωση</span>
<span class="t n" style="left:986.00px;top:527.80px;font-size:6.36px;color:#b4b4b4;transform:scaleX(0.8793);">Ακύρωση</span>
<span class="t b" style="left:129.70px;top:115.80px;font-size:6.47px;color:#fff;transform:scaleX(0.8866);">1</span>
<span class="t b" style="left:127.40px;top:137.80px;font-size:6.47px;color:#fff;transform:scaleX(0.8866);">2</span>
<span class="t b" style="left:635.60px;top:164.50px;font-size:6.47px;color:#fff;transform:scaleX(0.8866);">3</span>
<span class="t b" style="left:1005.30px;top:246.30px;font-size:6.47px;color:#fff;transform:scaleX(0.8866);">4</span>
</body></html>
